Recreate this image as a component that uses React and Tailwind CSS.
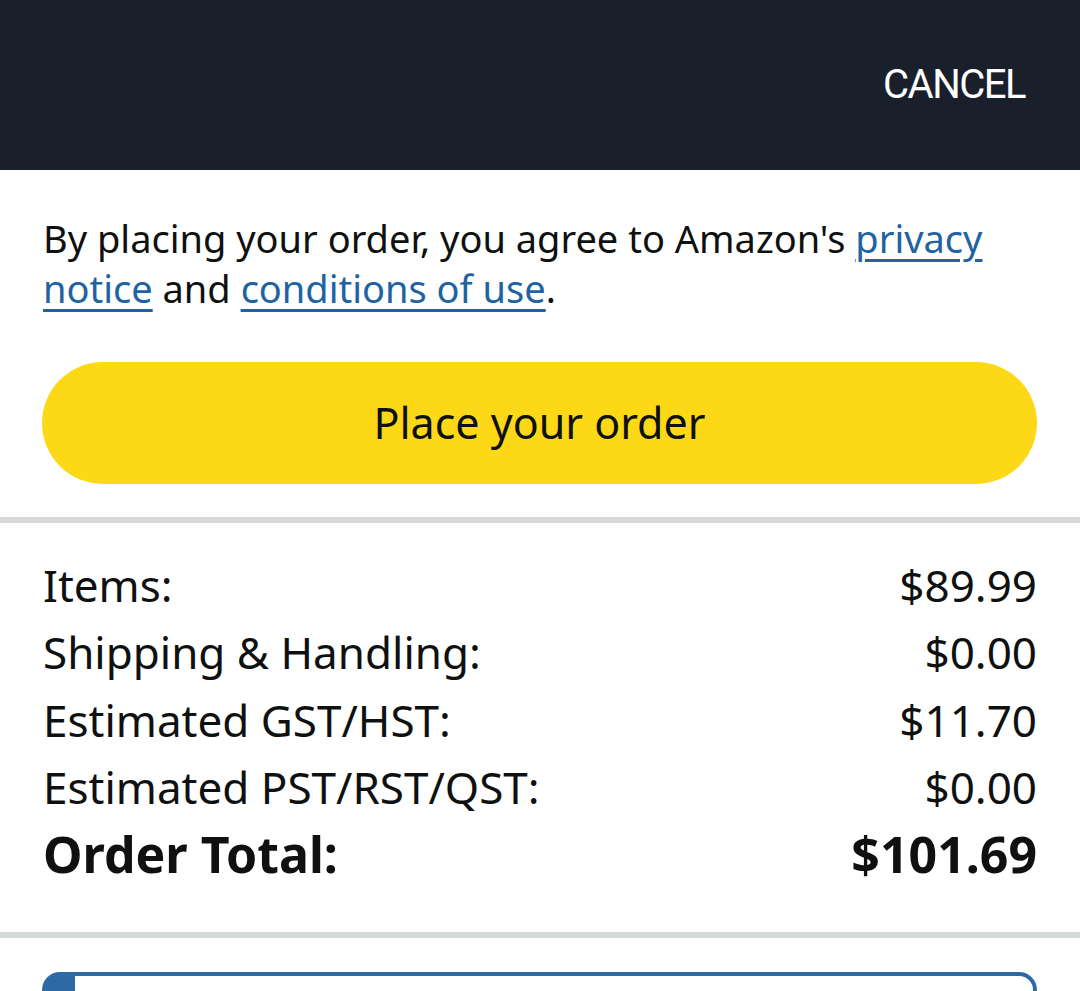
export default function App() {
  const rows = [
    { label: 'Items:', value: '$89.99' },
    { label: 'Shipping & Handling:', value: '$0.00' },
    { label: 'Estimated GST/HST:', value: '$11.70' },
    { label: 'Estimated PST/RST/QST:', value: '$0.00' },
  ];

  return (
    <div className="min-h-screen bg-white overflow-hidden" style={{ fontFamily: '"Noto Sans", sans-serif' }}>
      {/* top bar */}
      <div className="h-[170px] bg-[#19202b] flex items-center justify-end pr-[55px]">
        <span className="text-white text-[40px] font-[Roboto] tracking-[-1.5px]">CANCEL</span>
      </div>

      {/* agreement */}
      <div className="px-[43px] pt-[43px]">
        <p className="text-[38px] leading-[50px] text-[#0f1111]">
          By placing your order, you agree to Amazon's{' '}
          <a className="text-[#2162a1] underline underline-offset-[6px] decoration-[3px]">privacy notice</a> and{' '}
          <a className="text-[#2162a1] underline underline-offset-[6px] decoration-[3px]">conditions of use</a>.
        </p>
      </div>

      <div className="px-[42px] pr-[43px] pt-[49px] pb-[33px]">
        <button className="w-full h-[122px] rounded-full bg-[#fdd816] text-[43px] text-[#0f1111]">
          Place your order
        </button>
      </div>

      <div className="h-[6px] bg-[#d5d9d9]" />

      {/* summary */}
      <div className="px-[43px] pt-[28px] pb-[43px] text-[#0f1111]">
        {rows.map((r) => (
          <div key={r.label} className="flex justify-between items-center h-[67.5px] text-[44px]">
            <span>{r.label}</span>
            <span>{r.value}</span>
          </div>
        ))}
        <div className="flex justify-between items-center h-[67.5px] text-[50px] font-bold">
          <span>Order Total:</span>
          <span>$101.69</span>
        </div>
      </div>

      <div className="h-[6px] bg-[#d5d9d9]" />

      <div className="pt-[34px] px-[42px] pr-[43px]">
        <div className="h-[120px] border-[4px] border-l-[33px] border-[#2d6aa5] rounded-[18px]" />
      </div>
    </div>
  );
}
